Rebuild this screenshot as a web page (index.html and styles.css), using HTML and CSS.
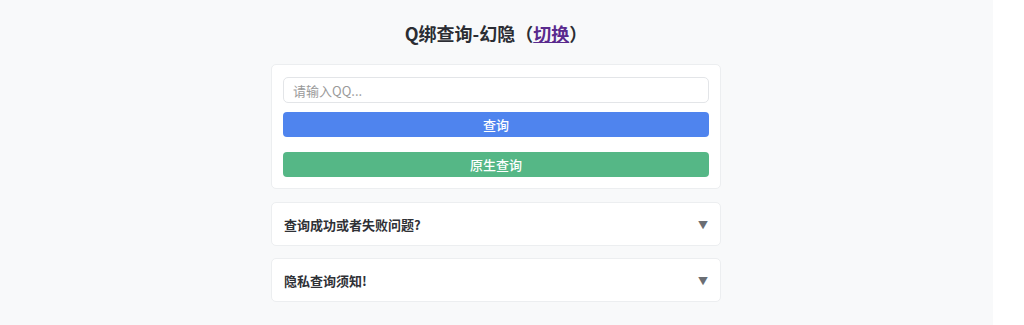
FILE: index.html
```html
<!DOCTYPE html>
<html>
<head>
  <meta charset="utf-8">
  <link rel="stylesheet" href="styles.css">
</head>
<body>

<div class="page">
  <h1 class="title">Q绑查询-幻隐（<a href="#" class="switch">切换</a>）</h1>

  <div class="wrap">
    <div class="card">
      <input type="text" class="qq-input" placeholder="请输入QQ...">
      <button class="btn btn-blue">查询</button>
      <button class="btn btn-green">原生查询</button>
    </div>

    <div class="fold">
      <span>查询成功或者失败问题?</span>
      <span class="arrow">▼</span>
    </div>

    <div class="fold">
      <span>隐私查询须知!</span>
      <span class="arrow">▼</span>
    </div>
  </div>
</div>

</body>
</html>
```

FILE: styles.css
```css
html, body {
  margin: 0;
  background: #fff;
}
body {
  font-family: "Noto Sans CJK SC", "Noto Sans", sans-serif;
  color: #333;
}
.page {
  width: 993px;
  height: 325px;
  background: #f8f9fa;
  overflow: hidden;
}
.title {
  margin: 0 0 19px;
  padding-top: 21px;
  width: 992px;
  text-align: center;
  font-size: 18px;
  line-height: 24px;
  font-weight: bold;
  color: #2b2d33;
}
.switch {
  color: #5a2a8e;
  text-decoration: underline;
}
.wrap {
  width: 450px;
  margin-left: 271px;
}
.card {
  background: #fff;
  border: 1px solid #eceef0;
  border-radius: 5px;
  padding: 12px 11px 11px;
  display: flex;
  flex-direction: column;
}
.qq-input {
  height: 26px;
  box-sizing: border-box;
  border: 1px solid #e3e5e8;
  border-radius: 5px;
  padding: 0 9px;
  font-family: inherit;
  font-size: 13px;
  outline: none;
}
.qq-input::placeholder {
  color: #9a9a9a;
}
.btn {
  height: 25px;
  border: none;
  border-radius: 4px;
  color: #fff;
  font-family: inherit;
  font-size: 13px;
  font-weight: 500;
  padding: 0;
}
.btn-blue {
  margin-top: 9px;
  background: #4f84ee;
}
.btn-green {
  margin-top: 15px;
  background: #55b786;
}
.fold {
  margin-top: 12px;
  height: 44px;
  box-sizing: border-box;
  background: #fff;
  border: 1px solid #eceef0;
  border-radius: 5px;
  padding: 0 12px 0 12px;
  display: flex;
  align-items: center;
  justify-content: space-between;
  font-size: 13px;
  font-weight: bold;
  color: #2f3136;
}
.card + .fold {
  margin-top: 13px;
}
.arrow {
  color: #6b6e73;
  font-size: 10px;
}
```
